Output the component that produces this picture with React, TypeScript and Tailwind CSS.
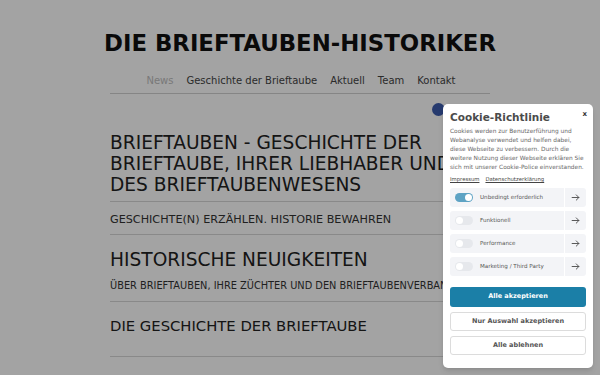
import React from 'react';

const navItems = ['News', 'Geschichte der Brieftaube', 'Aktuell', 'Team', 'Kontakt'];
const categories = [
  { label: 'Unbedingt erforderlich', on: true },
  { label: 'Funktionell', on: false },
  { label: 'Performance', on: false },
  { label: 'Marketing / Third Party', on: false },
];

const Arrow = () => (
  <svg viewBox="0 0 12 12" className="w-[9px] h-[9px]" fill="none" stroke="#555" strokeWidth="1.3" strokeLinecap="round" strokeLinejoin="round">
    <path d="M1.5 6h9M7 2.5 10.5 6 7 9.5" />
  </svg>
);

const CookieDialog: React.FC = () => (
  <div className="absolute left-[443px] top-[104px] w-[150px] h-[264px] bg-white rounded-[5px] shadow-md px-[7px] pt-[6px] font-['DejaVu_Sans',sans-serif]">
    <div className="flex items-start justify-between">
      <h2 className="text-[10.5px] leading-[14px] font-bold text-[#4b4b4b]">Cookie-Richtlinie</h2>
      <span className="text-[7px] font-bold text-[#333] leading-none mt-[1px] mr-[-1px]">x</span>
    </div>
    <p className="mt-[3px] text-[5.85px] leading-[9px] text-[#666] whitespace-nowrap">
      Cookies werden zur Benutzerführung und<br />
      Webanalyse verwendet und helfen dabei,<br />
      diese Webseite zu verbessern. Durch die<br />
      weitere Nutzung dieser Webseite erklären Sie<br />
      sich mit unserer Cookie-Police einverstanden.
    </p>
    <div className="mt-[3px] flex gap-[6px] text-[5.3px] leading-[8px] text-[#444] underline">
      <span>Impressum</span>
      <span>Datenschutzerklärung</span>
    </div>
    <div className="mt-[5px] flex flex-col gap-[4px]">
      {categories.map(c => (
        <div key={c.label} className="flex items-center h-[19px] rounded-[3px] bg-[#f3f4f7]">
          <div className={`ml-[5px] w-[18px] h-[9px] rounded-full flex items-center px-[1px] ${c.on ? 'bg-[#5ea3c4] justify-end' : 'bg-[#e6e8ec] justify-start'}`}>
            <div className="w-[7px] h-[7px] rounded-full bg-white" />
          </div>
          <span className="ml-[7px] flex-1 text-[5.6px] text-[#555]">{c.label}</span>
          <div className="w-[22px] h-full border-l border-white flex items-center justify-center">
            <Arrow />
          </div>
        </div>
      ))}
    </div>
    <div className="mt-[11px] flex flex-col gap-[5px]">
      <button className="h-[20px] rounded-[3px] bg-[#1b7fa7] text-white text-[6.5px] font-bold">Alle akzeptieren</button>
      <button className="h-[19px] rounded-[3px] bg-white border border-[#dcdcdc] text-[#555] text-[6.5px] font-bold">Nur Auswahl akzeptieren</button>
      <button className="h-[19px] rounded-[3px] bg-white border border-[#dcdcdc] text-[#555] text-[6.5px] font-bold">Alle ablehnen</button>
    </div>
  </div>
);

export default function App() {
  return (
    <div className="relative w-[600px] h-[375px] overflow-hidden bg-white font-['DejaVu_Sans',sans-serif] text-[#2a2a2a]">
      <header className="pt-[30px] text-center">
        <h1 className="text-[22.8px] leading-[26px] font-bold text-[#111]">DIE BRIEFTAUBEN-HISTORIKER</h1>
        <nav className="mt-[18px] flex justify-center gap-[13px] text-[10px] leading-[14px] pl-[2px]">
          {navItems.map((item, i) => (
            <span key={item} className={i === 0 ? 'text-[#bdbdbd]' : 'text-[#444]'}>{item}</span>
          ))}
        </nav>
      </header>
      <main className="w-[380px] mx-auto mt-[5px] border-t border-[#d0d0d0]">
        <section className="pt-[38px] pb-[6px] border-b border-[#d6d6d6]">
          <h2 className="text-[18.6px] leading-[21px] text-[#222] whitespace-nowrap">
            BRIEFTAUBEN - GESCHICHTE DER<br />BRIEFTAUBE, IHRER LIEBHABER UND<br />DES BRIEFTAUBENWESENS
          </h2>
        </section>
        <p className="pt-[11px] pb-[8px] text-[11.2px] leading-[13px] text-[#333] border-b border-[#d6d6d6]">GESCHICHTE(N) ERZÄHLEN. HISTORIE BEWAHREN</p>
        <section className="pt-[13px] pb-[9px] border-b border-[#d6d6d6]">
          <h2 className="text-[18.6px] leading-[23px] text-[#222]">HISTORISCHE NEUIGKEITEN</h2>
          <p className="mt-[9px] text-[9.8px] leading-[12px] text-[#333] whitespace-nowrap">ÜBER BRIEFTAUBEN, IHRE ZÜCHTER UND DEN BRIEFTAUBENVERBAND</p>
        </section>
        <section className="pt-[15px] pb-[21px] border-b border-[#d6d6d6]">
          <h3 className="text-[14.8px] leading-[18px] text-[#222]">DIE GESCHICHTE DER BRIEFTAUBE</h3>
        </section>
      </main>
      <div className="absolute left-[432px] top-[103px] w-[13px] h-[13px] rounded-full bg-[#3c5bac]" />
      <div className="absolute inset-0 bg-black/[0.36]" />
      <CookieDialog />
    </div>
  );
}
